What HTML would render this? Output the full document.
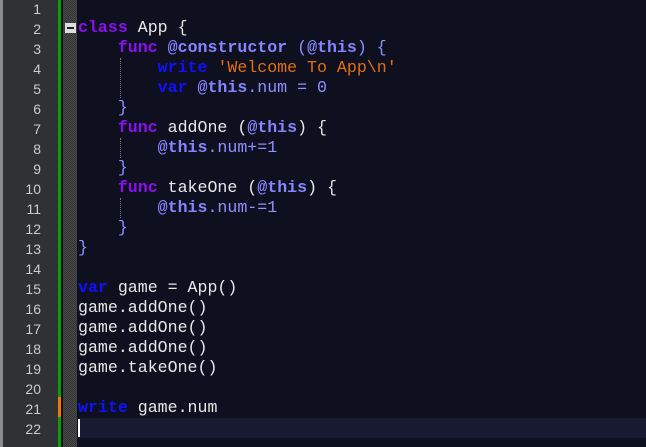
<!DOCTYPE html><html><head><style>
body{margin:0;width:646px;height:447px;overflow:hidden;background:#0e1020;font-family:"Liberation Mono",monospace;}
#g{position:absolute;left:0;top:0;width:58px;height:447px;background:#2e3234;border-left:3px solid #8a8c8e;box-sizing:border-box}
.n{position:absolute;left:3px;width:38px;text-align:right;color:#c8cccc;font-size:14px;font-family:"Liberation Sans",sans-serif}
#bar{position:absolute;left:58px;top:0;width:3px;height:447px;background:#0a9a0a}
#fold{position:absolute;left:63px;top:0;width:14px;height:447px;background:repeating-conic-gradient(#333 0 25%,#4a4a4a 0 50%) 0 0/2px 2px}
.l{position:absolute;left:78px;height:20px;line-height:20px;font-size:16.6px;color:#e8e8e8;white-space:pre}
.k{color:#8a10f0;font-weight:bold}.b{color:#1010ff;font-weight:bold}.t{color:#8585ff;font-weight:bold}.s{color:#e07010}.p{color:#9090ff}
.ig{position:absolute;border-left:1px dotted #777;width:0}
</style></head><body>
<div id="g"></div><div id="bar"></div>
<div style="position:absolute;left:58px;top:397px;width:3px;height:20px;background:#f07800"></div>
<div id="fold"></div>
<div style="position:absolute;left:78px;top:418px;width:568px;height:20px;background:#171a30"></div>
<div style="position:absolute;left:78px;top:419px;width:2px;height:18px;background:#fff"></div>
<div style="position:absolute;left:65px;top:23px;width:11px;height:10px;background:#ddd"><div style="margin:4px 2px;height:2px;background:#222"></div></div>
<div class="ig" style="left:120px;top:58px;height:40px"></div>
<div class="ig" style="left:120px;top:138px;height:20px"></div>
<div class="ig" style="left:120px;top:198px;height:20px"></div>
<div class="n" style="top:1px">1</div><div class="n" style="top:21px">2</div><div class="n" style="top:41px">3</div><div class="n" style="top:61px">4</div><div class="n" style="top:81px">5</div><div class="n" style="top:101px">6</div><div class="n" style="top:121px">7</div><div class="n" style="top:141px">8</div><div class="n" style="top:161px">9</div><div class="n" style="top:181px">10</div><div class="n" style="top:201px">11</div><div class="n" style="top:221px">12</div><div class="n" style="top:241px">13</div><div class="n" style="top:261px">14</div><div class="n" style="top:281px">15</div><div class="n" style="top:301px">16</div><div class="n" style="top:321px">17</div><div class="n" style="top:341px">18</div><div class="n" style="top:361px">19</div><div class="n" style="top:381px">20</div><div class="n" style="top:401px">21</div><div class="n" style="top:421px">22</div>
<div class="l" style="top:18px"><span class="k">class</span> App {</div>
<div class="l" style="top:38px">    <span class="k">func</span> <span class="t">@constructor</span> <span class="p">(</span><span class="t">@this</span><span class="p">) {</span></div>
<div class="l" style="top:58px">        <span class="b">write</span> <span class="s">'Welcome To App\n'</span></div>
<div class="l" style="top:78px">        <span class="b">var</span> <span class="t">@this</span><span class="p">.num = 0</span></div>
<div class="l" style="top:98px">    <span class="p">}</span></div>
<div class="l" style="top:118px">    <span class="k">func</span> addOne (<span class="t">@this</span>) {</div>
<div class="l" style="top:138px">        <span class="t">@this</span><span class="p">.num+=1</span></div>
<div class="l" style="top:158px">    <span class="p">}</span></div>
<div class="l" style="top:178px">    <span class="k">func</span> takeOne (<span class="t">@this</span>) {</div>
<div class="l" style="top:198px">        <span class="t">@this</span><span class="p">.num-=1</span></div>
<div class="l" style="top:218px">    <span class="p">}</span></div>
<div class="l" style="top:238px"><span class="p">}</span></div>
<div class="l" style="top:278px"><span class="b">var</span> game = App()</div>
<div class="l" style="top:298px">game.addOne()</div>
<div class="l" style="top:318px">game.addOne()</div>
<div class="l" style="top:338px">game.addOne()</div>
<div class="l" style="top:358px">game.takeOne()</div>
<div class="l" style="top:398px"><span class="b">write</span> game.num</div>
</body></html>
